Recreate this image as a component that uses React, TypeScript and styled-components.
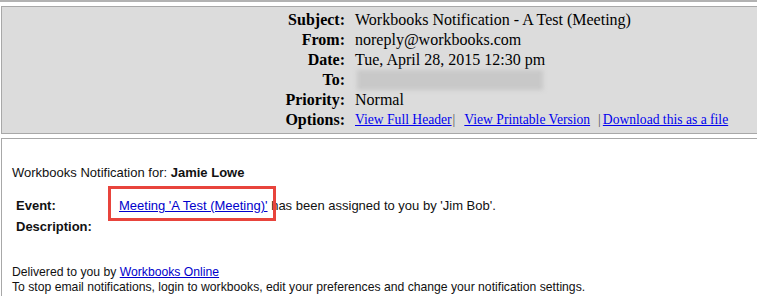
import React from "react";
import styled, { createGlobalStyle } from "styled-components";

const Global = createGlobalStyle`
  html, body { margin: 0; padding: 0; background: #ffffff; }
  body { width: 757px; height: 296px; overflow: hidden; }
`;

const Page = styled.div`
  display: flex;
  flex-direction: column;
  width: 757px;
  height: 296px;
`;

const TopBar = styled.div`
  height: 2px;
  flex: none;
  background: #b2b2b2;
  margin-bottom: 4px;
`;

const HeaderBox = styled.div`
  flex: none;
  margin-left: 1px;
  border: 1px solid #a8a8a8;
  border-right: none;
  background: #dcdcdc;
  padding: 3px 0 3px 0;
  display: grid;
  grid-template-columns: 343px 1fr;
  column-gap: 10px;
  row-gap: 0;
  font-family: "Liberation Serif", "Times New Roman", serif;
  font-size: 16px;
  color: #000;
`;

const Label = styled.div`
  text-align: right;
  font-weight: bold;
  line-height: 20px;
  height: 20px;
`;

const Value = styled.div`
  line-height: 20px;
  height: 20px;
  white-space: nowrap;
  display: flex;
  align-items: center;
`;

const Redacted = styled.div`
  width: 186px;
  height: 20px;
  background: #c8c8c8;
  filter: blur(2px);
  margin-left: 2px;
`;

const OptionLink = styled.a`
  color: #0000ee;
  text-decoration: underline;
  font-size: 13.6px;
`;

const Sep = styled.span<{ $l: number; $r: number }>`
  font-size: 13.6px;
  color: #555;
  margin: 0 ${(p) => `${p.$r}px 0 ${p.$l}px`};
`;

const BodyBox = styled.div`
  flex: 1;
  min-height: 0;
  overflow: hidden;
  margin-top: 4px;
  margin-left: 1px;
  border-top: 1px solid #a8a8a8;
  border-left: 1px solid #a8a8a8;
  padding: 26px 0 0 10px;
  font-family: "Liberation Sans", Arial, sans-serif;
  font-size: 13px;
  color: #111;
`;

const Intro = styled.p`
  margin: 0 0 18px 0;
  line-height: 15px;
`;

const Fields = styled.div`
  display: grid;
  grid-template-columns: 103px 1fr;
  padding-left: 4px;
  row-gap: 6px;
`;

const FieldLabel = styled.div`
  font-weight: bold;
  line-height: 15px;
`;

const FieldValue = styled.div`
  line-height: 15px;
  white-space: nowrap;
`;

const Highlight = styled.span`
  position: relative;
`;

const Box = styled.span`
  position: absolute;
  left: -11px;
  right: -8px;
  top: -12px;
  bottom: -8px;
  border: 3px solid #e8443c;
  pointer-events: none;
`;

const Link = styled.a`
  color: #0000cc;
  text-decoration: underline;
`;

const Footer = styled.div`
  margin-top: 31px;
  line-height: 15px;
  font-size: 12.2px;
`;

export default function App() {
  return (
    <Page>
      <Global />
      <TopBar />
      <HeaderBox>
        <Label>Subject:</Label>
        <Value>Workbooks Notification - A Test (Meeting)</Value>
        <Label>From:</Label>
        <Value>noreply@workbooks.com</Value>
        <Label>Date:</Label>
        <Value>Tue, April 28, 2015 12:30 pm</Value>
        <Label>To:</Label>
        <Value>
          <Redacted />
        </Value>
        <Label>Priority:</Label>
        <Value>Normal</Value>
        <Label>Options:</Label>
        <Value>
          <OptionLink href="#">View Full Header</OptionLink>
          <Sep $l={1} $r={9}>|</Sep>
          <OptionLink href="#">View Printable Version</OptionLink>
          <Sep $l={8} $r={2}>|</Sep>
          <OptionLink href="#">Download this as a file</OptionLink>
        </Value>
      </HeaderBox>
      <BodyBox>
        <Intro>
          Workbooks Notification for: <b>Jamie Lowe</b>
        </Intro>
        <Fields>
          <FieldLabel>Event:</FieldLabel>
          <FieldValue>
            <Highlight>
              <Link href="#">Meeting 'A Test (Meeting)'</Link>
              <Box />
            </Highlight>{" "}
            has been assigned to you by 'Jim Bob'.
          </FieldValue>
          <FieldLabel>Description:</FieldLabel>
          <FieldValue />
        </Fields>
        <Footer>
          Delivered to you by <Link href="#">Workbooks Online</Link>
          <br />
          To stop email notifications, login to workbooks, edit your preferences and change your notification settings.
        </Footer>
      </BodyBox>
    </Page>
  );
}
